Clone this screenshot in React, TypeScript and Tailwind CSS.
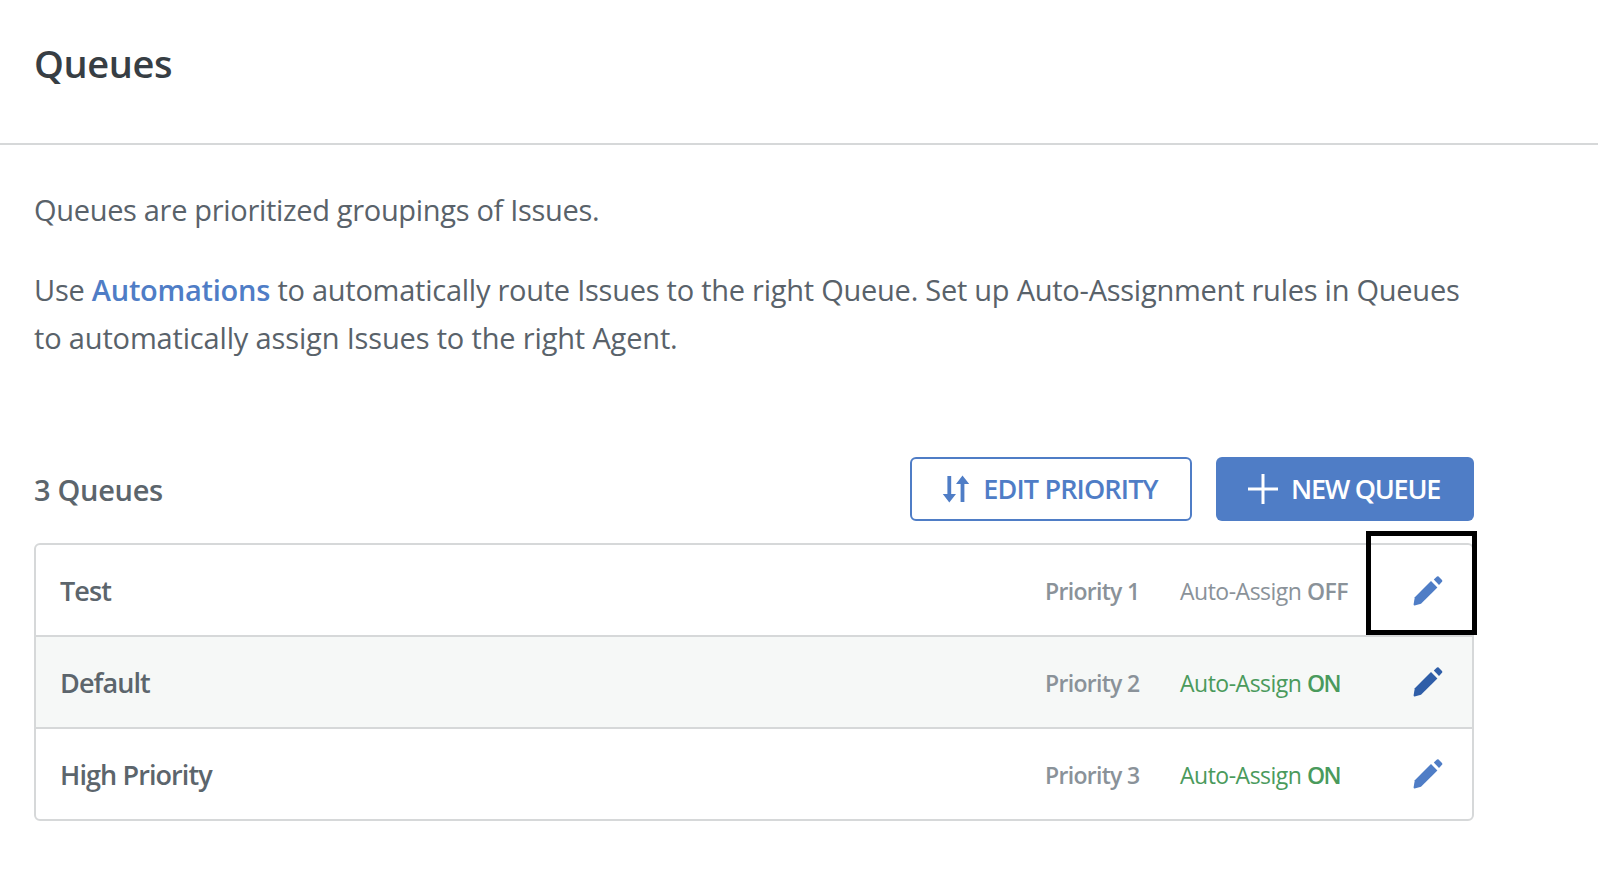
const Pencil = ({ className }: { className: string }) => (
  <svg viewBox="0 0 30 30" className={`w-[30px] h-[30px] ${className}`} fill="currentColor">
    <path d="M20.8 3.4 L24 .6 Q24.8 0 25.6 .6 L29 4 Q29.7 4.9 29 5.8 L26 8.9 Z" />
    <path d="M18 5 L24.4 11.4 L8 27.8 L1.6 29.4 Q.4 29.6 .6 28.3 L1.8 21.2 Z" />
  </svg>
);

const SortIcon = () => (
  <svg viewBox="0 0 28 28" className="w-[28px] h-[28px]" fill="currentColor">
    <path d="M5.4 1 H9.2 V19 H14 L7.3 27.5 L.8 19 H5.4 Z" />
    <path d="M18.6 27 H22.4 V9 H27.2 L20.5 .5 L14 9 H18.6 Z" />
  </svg>
);

const rows = [
  { name: "Test", priority: "Priority 1", on: false },
  { name: "Default", priority: "Priority 2", on: true },
  { name: "High Priority", priority: "Priority 3", on: true },
];

export default function App() {
  return (
    <div className="relative w-[1598px] h-[886px] bg-white overflow-hidden font-['Open_Sans',sans-serif] text-[#59626a]">
      <header className="h-[145px] border-b-2 border-[#d6d8d9] pl-[34px] pt-[37px]">
        <h1 className="text-[38px] leading-[52px] font-semibold text-[#373e44] tracking-[-0.4px]">Queues</h1>
      </header>
      <main className="px-[34px] w-[1508px]">
        <p className="mt-[41px] text-[29px] leading-[48px] tracking-[-0.32px]">Queues are prioritized groupings of Issues.</p>
        <p className="mt-[32px] text-[29px] leading-[48px] tracking-[-0.25px]">
          Use <a className="text-[#4f7dc6] font-semibold">Automations</a> to automatically route Issues to the right Queue. Set up Auto-Assignment rules in Queues
          <br />
          <span className="tracking-[-0.16px]">to automatically assign Issues to the right Agent.</span>
        </p>
        <div className="mt-[95px] flex items-center justify-between">
          <div className="text-[29px] font-semibold tracking-[-0.3px] text-[#5c656c] translate-y-[1px]">3 Queues</div>
          <div className="flex gap-[24px]">
            <button className="w-[282px] h-[64px] pr-[2px] rounded-[6px] border-2 border-[#4f7dc6] text-[#4f7dc6] flex items-center justify-center gap-[13px] text-[27px] font-semibold tracking-[-0.85px]">
              <SortIcon />
              EDIT PRIORITY
            </button>
            <button className="w-[258px] h-[64px] pr-[2px] rounded-[6px] bg-[#4f7dc6] text-white flex items-center justify-center gap-[13px] text-[27px] font-semibold tracking-[-1.25px]">
              <svg viewBox="0 0 30 30" className="w-[30px] h-[30px]" fill="currentColor">
                <path d="M13.5 0 H16.5 V13.5 H30 V16.5 H16.5 V30 H13.5 V16.5 H0 V13.5 H13.5 Z" />
              </svg>
              NEW QUEUE
            </button>
          </div>
        </div>
        <div className="mt-[22px] w-[1440px] border-2 border-[#d6d8d9] rounded-[6px]">
          {rows.map((r, i) => (
            <div key={r.name} className={`flex items-center pl-[24px] ${i > 0 ? "h-[92px] border-t-2 border-[#d6d8d9]" : "h-[90px] pt-[2px]"} ${i === 1 ? "bg-[#f6f8f7]" : ""}`}>
              <div className={`flex-1 text-[27px] font-semibold tracking-[-0.9px] text-[#5c656c] ${i > 0 ? "pt-[2px]" : ""}`}>{r.name}</div>
              <div className={`w-[135px] text-[23px] font-semibold tracking-[-0.7px] text-[#8a9299] ${i > 0 ? "pt-[2px]" : ""}`}>{r.priority}</div>
              <div className={`w-[233px] text-[23px] tracking-[-0.5px] ${i > 0 ? "pt-[2px]" : ""} ${r.on ? "text-[#4a9a5c]" : "text-[#8a9299]"}`}>
                Auto-Assign <span className={`font-semibold ${r.on ? "tracking-[-1.5px]" : ""}`}>{r.on ? "ON" : "OFF"}</span>
              </div>
              <div className="w-[59px]">
                <Pencil className={i === 1 ? "text-[#2f5ea8]" : "text-[#4f7dc6]"} />
              </div>
            </div>
          ))}
        </div>
      </main>
      <div className="absolute left-[1366px] top-[531px] w-[111px] h-[104px] border-[5px] border-black" />
    </div>
  );
}
